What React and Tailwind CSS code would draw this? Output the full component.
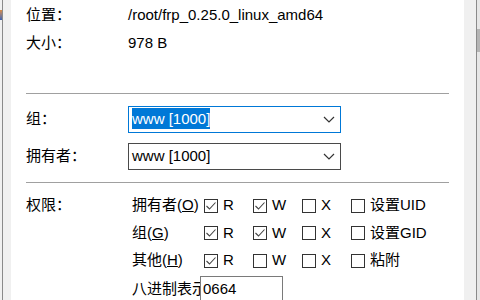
import { useState } from "react";

const font = { fontFamily: '"Liberation Sans", "Noto Sans CJK SC", sans-serif' };

function Chevron() {
  return (
    <svg width="12" height="7" viewBox="0 0 12 7" className="shrink-0">
      <path d="M1 1 L6 6 L11 1" fill="none" stroke="#333" strokeWidth="1.2" />
    </svg>
  );
}

function Check({ checked, onToggle, label }) {
  return (
    <div className="w-[49px] flex items-center gap-[5px] cursor-default" onClick={onToggle}>
      <div className="w-[14px] h-[14px] border border-[#333] bg-white flex items-center justify-center shrink-0">
        {checked && (
          <svg width="12" height="12" viewBox="0 0 12 12">
            <path d="M1.5 6 L4.5 9 L10.5 2.5" fill="none" stroke="#444" strokeWidth="1.1" />
          </svg>
        )}
      </div>
      <span className="whitespace-nowrap">{label}</span>
    </div>
  );
}

function Combo({ value, focused }) {
  return (
    <div
      className={
        "w-[213px] h-[27px] flex items-center pl-[3px] pr-[5px] bg-white border " +
        (focused ? "border-[#0078d7]" : "border-[#4a4a4a]")
      }
    >
      <span className="flex-1 whitespace-nowrap">
        <span className={focused ? "bg-[#0078d7] text-white py-[2px]" : ""}>{value}</span>
      </span>
      <Chevron />
    </div>
  );
}

export default function App() {
  const [perms, setPerms] = useState({
    ur: true, uw: true, ux: false, suid: false,
    gr: true, gw: true, gx: false, sgid: false,
    or: true, ow: false, ox: false, sticky: false,
  });
  const t = (k) => setPerms({ ...perms, [k]: !perms[k] });

  const rows = [
    { name: "拥有者", key: "O", h: "h-[27px]", r: "ur", w: "uw", x: "ux", s: "suid", sl: "设置UID" },
    { name: "组", key: "G", h: "h-[28px]", r: "gr", w: "gw", x: "gx", s: "sgid", sl: "设置GID" },
    { name: "其他", key: "H", h: "h-[27px]", r: "or", w: "ow", x: "ox", s: "sticky", sl: "粘附" },
  ];

  return (
    <div className="w-[480px] h-[300px] flex overflow-hidden bg-[#f0f0f0] text-[15px] text-black" style={font}>
      <div className="w-[2px] flex flex-col">
        <div className="mt-[10px] h-[10px] bg-gradient-to-b from-[#d9893c] to-[#3a5fb0]" />
      </div>
      <div className="w-px bg-[#8a8a8a]" />
      <div className="w-[8px] bg-[#f0f0f0]" />

      <div className="flex-1 bg-white pl-[15px] pr-[15px]">
        <div className="pt-px">
          <div className="h-[28px] flex items-center">
            <span className="w-[102px]">位置：</span>
            <span>/root/frp_0.25.0_linux_amd64</span>
          </div>
          <div className="h-[28px] flex items-center">
            <span className="w-[102px]">大小：</span>
            <span>978 B</span>
          </div>
        </div>

        <div className="mt-[36px] h-px bg-[#a0a0a0]" />

        <div className="mt-[12px] flex items-center">
          <span className="w-[102px]">组：</span>
          <Combo value="www [1000]" focused />
        </div>
        <div className="mt-[10px] flex items-center">
          <span className="w-[102px]">拥有者：</span>
          <Combo value="www [1000]" />
        </div>

        <div className="mt-[12px] h-px bg-[#a0a0a0]" />

        <div className="mt-[9px] flex">
          <div className="w-[106px] h-[27px] flex items-center">权限：</div>
          <div className="flex flex-col">
            {rows.map((row) => (
              <div key={row.key} className={row.h + " flex items-center"}>
                <span className="w-[72px] whitespace-nowrap">
                  {row.name}(<span className="underline">{row.key}</span>)
                </span>
                <Check checked={perms[row.r]} onToggle={() => t(row.r)} label="R" />
                <Check checked={perms[row.w]} onToggle={() => t(row.w)} label="W" />
                <Check checked={perms[row.x]} onToggle={() => t(row.x)} label="X" />
                <Check checked={perms[row.s]} onToggle={() => t(row.s)} label={row.sl} />
              </div>
            ))}
            <div className="mt-[2px] flex items-center">
              <span className="w-[68px] overflow-hidden whitespace-nowrap">八进制表示：</span>
              <div className="w-[83px] h-[27px] border border-[#7a7a7a] pl-[2px] flex items-center">0664</div>
            </div>
          </div>
        </div>
      </div>

      <div className="w-[12px] bg-[#f0f0f0]" />
      <div className="w-px bg-[#8a8a8a]" />
      <div className="w-[3px] bg-[#e6e6e6] flex flex-col">
        <div className="mt-[29px] h-[23px] bg-[#b5b5b5]" />
      </div>
    </div>
  );
}
